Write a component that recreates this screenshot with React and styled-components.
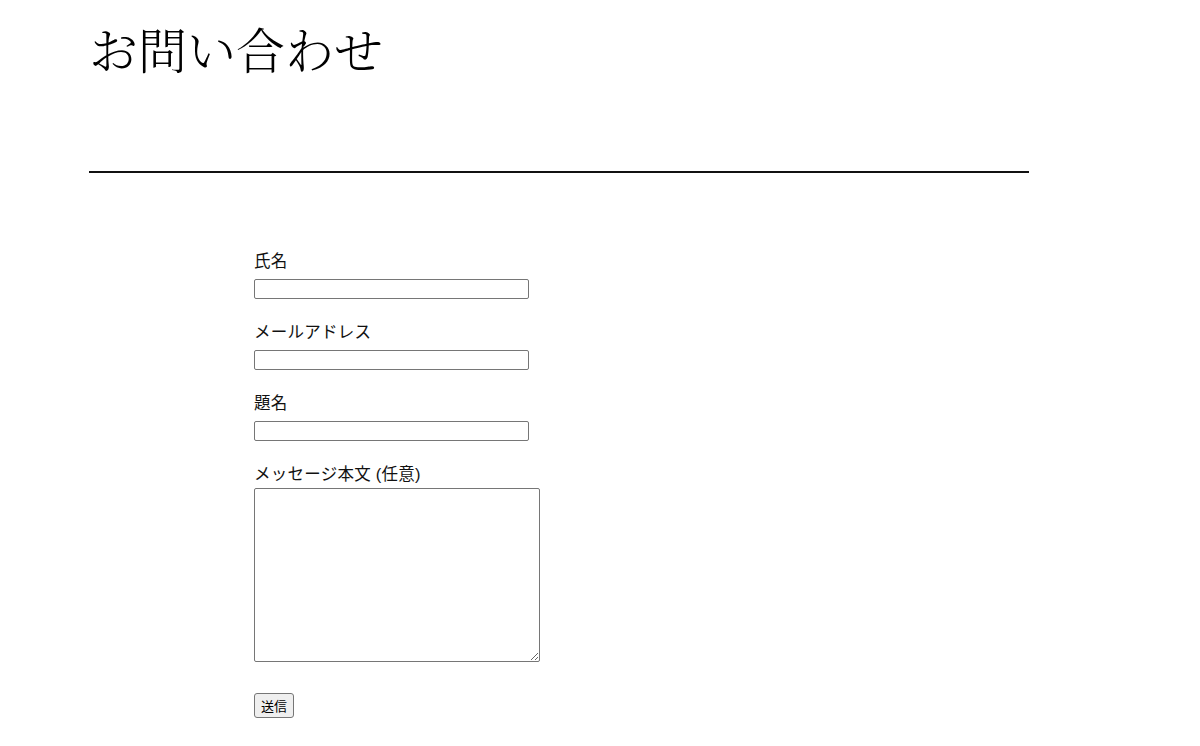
import React from "react";
import styled, { createGlobalStyle } from "styled-components";

const Global = createGlobalStyle`
  html, body { margin: 0; padding: 0; background: #fff; }
  body { font-family: "Liberation Sans", "Noto Sans CJK JP", sans-serif; color: #000; }
`;

const Page = styled.div`
  width: 940px;
  padding-left: 89px;
`;

const Title = styled.h1`
  margin: 0;
  padding-top: 24px;
  font-family: "Noto Serif CJK JP", "Liberation Serif", "Noto Sans CJK JP", serif;
  font-weight: 300;
  font-size: 49px;
  line-height: 49px;
  letter-spacing: 0;
`;

const Rule = styled.hr`
  margin: 98px 0 0;
  border: none;
  height: 2px;
  background: #111;
`;

const Form = styled.form`
  margin: 76px 0 0 165px;
  display: flex;
  flex-direction: column;
  align-items: flex-start;
`;

const Field = styled.div`
  display: flex;
  flex-direction: column;
  align-items: flex-start;
  margin-bottom: 21px;
`;

const Label = styled.label`
  font-family: "Liberation Sans", "Noto Sans CJK JP", sans-serif;
  font-size: 16.5px;
  line-height: 24px;
  letter-spacing: 0.25px;
  color: #111;
`;

const Input = styled.input`
  box-sizing: border-box;
  width: 275px;
  height: 20px;
  margin-top: 6px;
  border: 1px solid #767676;
  border-radius: 2px;
  padding: 1px 2px;
  font-size: 13px;
`;

const TextArea = styled.textarea`
  box-sizing: border-box;
  width: 286px;
  height: 174px;
  margin-top: 2px;
  border: 1px solid #767676;
  border-radius: 2px;
  padding: 2px;
`;

const Button = styled.button`
  box-sizing: border-box;
  margin-top: 10px;
  height: 25px;
  padding: 0 6px;
  background: #efefef;
  border: 1px solid #767676;
  border-radius: 3px;
  font-family: "Liberation Sans", "Noto Sans CJK JP", sans-serif;
  font-size: 13px;
  color: #000;
`;

const fields = [
  { label: "氏名", type: "text" },
  { label: "メールアドレス", type: "email" },
  { label: "題名", type: "text" },
];

export default function App() {
  return (
    <>
      <Global />
      <Page>
        <Title>お問い合わせ</Title>
        <Rule />
        <Form onSubmit={(e) => e.preventDefault()}>
          {fields.map((f) => (
            <Field key={f.label}>
              <Label>{f.label}</Label>
              <Input type={f.type} />
            </Field>
          ))}
          <Field>
            <Label>メッセージ本文 (任意)</Label>
            <TextArea />
          </Field>
          <Button type="submit">送信</Button>
        </Form>
      </Page>
    </>
  );
}
